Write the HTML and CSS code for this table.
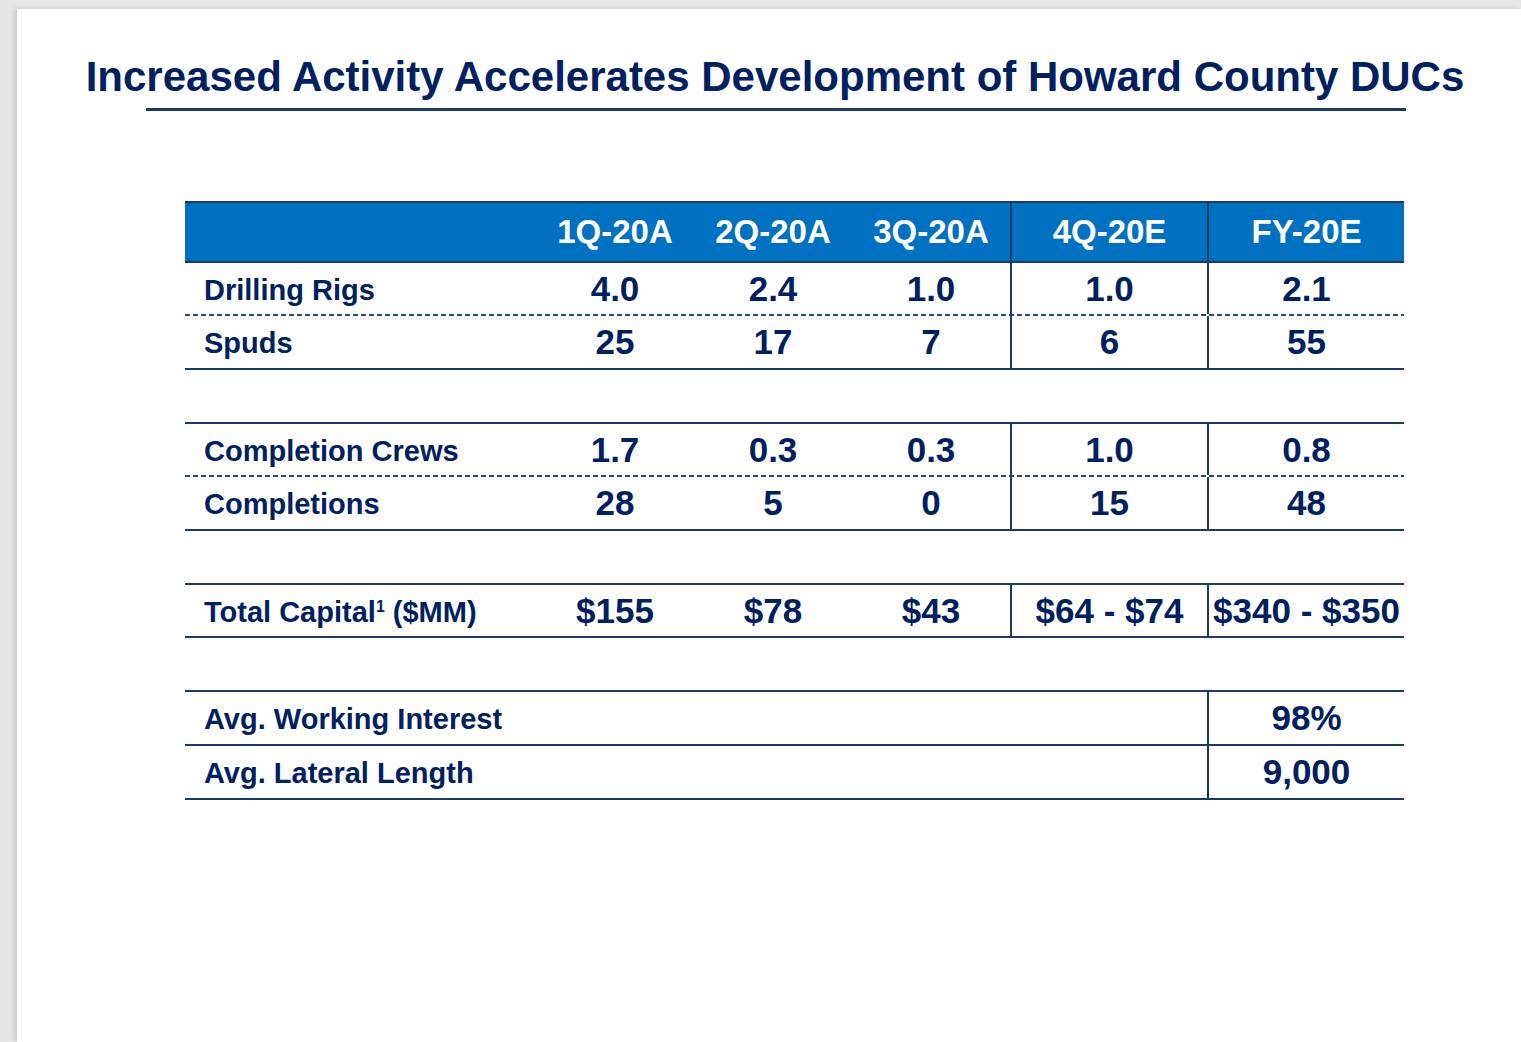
FILE: index.html
```html
<!DOCTYPE html>
<html lang="en">
<head>
<meta charset="utf-8">
<title>Howard County DUCs</title>
<link rel="stylesheet" href="styles.css">
</head>
<body>
<div class="page">
  <h1 class="title">Increased Activity Accelerates Development of Howard County DUCs</h1>
  <div class="rule"></div>

  <div class="table">
    <div class="row head">
      <div class="cell label"></div>
      <div class="cell">1Q-20A</div>
      <div class="cell">2Q-20A</div>
      <div class="cell">3Q-20A</div>
      <div class="cell vl">4Q-20E</div>
      <div class="cell vl">FY-20E</div>
    </div>

    <div class="row dashed h53">
      <div class="cell label">Drilling Rigs</div>
      <div class="cell">4.0</div>
      <div class="cell">2.4</div>
      <div class="cell">1.0</div>
      <div class="cell vl">1.0</div>
      <div class="cell vl">2.1</div>
    </div>
    <div class="row solid h54">
      <div class="cell label">Spuds</div>
      <div class="cell">25</div>
      <div class="cell">17</div>
      <div class="cell">7</div>
      <div class="cell vl">6</div>
      <div class="cell vl">55</div>
    </div>

    <div class="spacer"></div>

    <div class="row dashed h53">
      <div class="cell label">Completion Crews</div>
      <div class="cell">1.7</div>
      <div class="cell">0.3</div>
      <div class="cell">0.3</div>
      <div class="cell vl">1.0</div>
      <div class="cell vl">0.8</div>
    </div>
    <div class="row solid h54">
      <div class="cell label">Completions</div>
      <div class="cell">28</div>
      <div class="cell">5</div>
      <div class="cell">0</div>
      <div class="cell vl">15</div>
      <div class="cell vl">48</div>
    </div>

    <div class="spacer"></div>

    <div class="row solid h53">
      <div class="cell label"><span>Total Capital<sup>1</sup> ($MM)</span></div>
      <div class="cell">$155</div>
      <div class="cell">$78</div>
      <div class="cell">$43</div>
      <div class="cell vl">$64 - $74</div>
      <div class="cell vl">$340 - $350</div>
    </div>

    <div class="spacer"></div>

    <div class="row wide solid h54">
      <div class="cell label">Avg. Working Interest</div>
      <div class="cell vl">98%</div>
    </div>
    <div class="row wide solid h54">
      <div class="cell label">Avg. Lateral Length</div>
      <div class="cell vl">9,000</div>
    </div>
  </div>
</div>
</body>
</html>
```

FILE: styles.css
```css
* { box-sizing: border-box; }

html, body {
  margin: 0;
  padding: 0;
}

body {
  background: #e6e6e6;
  font-family: "Liberation Sans", Arial, sans-serif;
  color: #002060;
  padding-top: 9px;
  padding-left: 17px;
}

.page {
  background: #ffffff;
  min-height: 1033px;
  padding-top: 44px;
  box-shadow: -3px 0 5px rgba(0, 0, 0, 0.12);
}

.title {
  margin: 0;
  font-size: 42px;
  line-height: 48px;
  font-weight: bold;
  text-align: center;
  padding-left: 12px;
  color: #002060;
  white-space: nowrap;
}

.rule {
  width: 1260px;
  height: 3px;
  margin-left: 129px;
  margin-top: 7px;
  background: #1c3a66;
}

.table {
  width: 1219px;
  margin-left: 168px;
  margin-top: 90px;
}

.row {
  display: grid;
  grid-template-columns: 351px 158px 158px 158px 197px 197px;
  align-items: stretch;
}

.row.wide {
  grid-template-columns: 1022px 197px;
}

.cell {
  display: flex;
  align-items: center;
  justify-content: center;
  font-size: 35px;
  font-weight: bold;
  white-space: nowrap;
}

.cell.label {
  justify-content: flex-start;
  padding-left: 19px;
  padding-top: 3px;
  font-size: 29px;
}

.cell.vl {
  border-left: 2px solid #1c3a66;
}

.head {
  height: 62px;
  background: #0070c0;
  border-top: 2px solid #1c3a66;
  border-bottom: 2px solid #1c3a66;
}

.head .cell {
  color: #ffffff;
  font-size: 33px;
}

.h53 { height: 53px; }
.h54 { height: 54px; }

.row.solid {
  border-bottom: 2px solid #1c3a66;
}

.row.dashed {
  padding-bottom: 2px;
  background: repeating-linear-gradient(to right, #2a4577 0 5px, transparent 5px 8px) left bottom / 100% 2px no-repeat;
}

.spacer {
  height: 54px;
  border-bottom: 2px solid #1c3a66;
}

sup {
  font-size: 0.55em;
  line-height: 0;
  vertical-align: 0.6em;
}
```
